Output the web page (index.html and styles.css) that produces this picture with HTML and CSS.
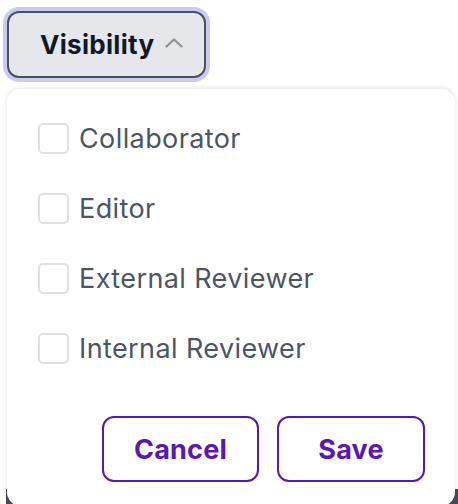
FILE: index.html
```html
<!DOCTYPE html>
<html lang="en">
<head>
<meta charset="utf-8">
<title>Visibility</title>
<link rel="stylesheet" href="styles.css">
</head>
<body>
<div class="page">
  <button class="trigger" type="button">
    <span class="trigger-label">Visibility</span>
    <svg class="chevron" width="18" height="10" viewBox="0 0 18 10" aria-hidden="true"><path d="M1.5 8.5 L9 1.5 L16.5 8.5" fill="none" stroke="currentColor" stroke-width="2.2" stroke-linecap="round" stroke-linejoin="round"/></svg>
  </button>
  <div class="backdrop"></div>
  <div class="menu">
    <ul class="options">
      <li class="option"><span class="box"></span><span class="option-label">Collaborator</span></li>
      <li class="option"><span class="box"></span><span class="option-label">Editor</span></li>
      <li class="option"><span class="box"></span><span class="option-label">External Reviewer</span></li>
      <li class="option"><span class="box"></span><span class="option-label">Internal Reviewer</span></li>
    </ul>
    <div class="actions">
      <button class="btn btn-cancel" type="button">Cancel</button>
      <button class="btn btn-save" type="button">Save</button>
    </div>
  </div>
</div>
</body>
</html>
```

FILE: styles.css
```css
html, body {
  margin: 0;
  padding: 0;
  background: #ffffff;
}
body {
  font-family: Inter, "Liberation Sans", sans-serif;
  width: 458px;
  height: 504px;
  overflow: hidden;
}
.page {
  position: relative;
  padding: 11px 0 0 7px;
  display: flex;
  flex-direction: column;
  align-items: flex-start;
}
.trigger {
  box-sizing: border-box;
  width: 199px;
  height: 67px;
  display: flex;
  align-items: center;
  gap: 11px;
  padding: 0 0 0 31px;
  margin: 0;
  background: #e5e7eb;
  border: 2px solid #4b5060;
  border-radius: 12px;
  box-shadow: 0 0 0 4px #cbcaf6;
  font-family: inherit;
  cursor: pointer;
}
.trigger-label {
  font-size: 26px;
  font-weight: 700;
  color: #111827;
  letter-spacing: 0.3px;
}
.chevron {
  color: #8b9099;
  margin-top: -3px;
}
.backdrop {
  margin-top: 411px;
  margin-left: -1px;
  width: 460px;
  height: 30px;
  background: #4a4a58;
}
.menu {
  position: absolute;
  top: 89px;
  left: 7px;
  box-sizing: border-box;
  width: 448px;
  height: 417px;
  background: #ffffff;
  border-radius: 14px;
  box-shadow: 0 0 6px rgba(0, 0, 0, 0.08), 0 -2px 4px rgba(0, 0, 0, 0.04);
  padding: 34px 30px 0 31px;
  display: flex;
  flex-direction: column;
}
.options {
  list-style: none;
  margin: 0;
  padding: 0;
  display: flex;
  flex-direction: column;
  gap: 39px;
}
.option {
  display: flex;
  align-items: center;
  gap: 10px;
  height: 31px;
}
.box {
  box-sizing: border-box;
  width: 31px;
  height: 31px;
  border: 2px solid #dfe0e4;
  border-radius: 5px;
  background: #ffffff;
}
.option-label {
  font-size: 27px;
  letter-spacing: 0.4px;
  color: #4b5563;
  line-height: 31px;
}
.actions {
  margin-top: 52px;
  display: flex;
  justify-content: flex-end;
  gap: 18px;
}
.btn {
  box-sizing: border-box;
  height: 66px;
  background: #ffffff;
  border: 2px solid #5b17b3;
  border-radius: 12px;
  color: #5b17b3;
  font-family: inherit;
  font-size: 27px;
  font-weight: 700;
  letter-spacing: 0.2px;
  padding: 0;
  margin: 0;
  cursor: pointer;
}
.btn-cancel {
  width: 157px;
}
.btn-save {
  width: 148px;
}
```
